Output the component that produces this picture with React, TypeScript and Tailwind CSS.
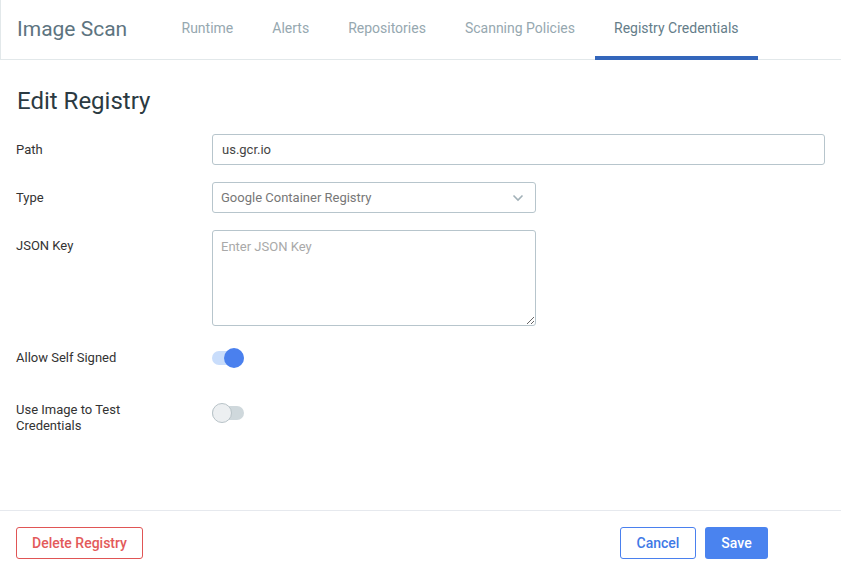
import { useState } from 'react';

const tabs = ['Runtime', 'Alerts', 'Repositories', 'Scanning Policies', 'Registry Credentials'];

function Toggle({ on }: { on: boolean }) {
  return (
    <div className="relative w-[32px] h-[22px] flex items-center">
      <div className={`w-[32px] h-[14px] rounded-full ${on ? 'bg-[#c9ddfb]' : 'bg-[#cfd8dc]'}`} />
      <div
        className={`absolute top-[1px] w-[20px] h-[20px] rounded-full ${
          on ? 'right-0 bg-[#4a80ee]' : 'left-0 bg-[#eceff1] border border-[#b8c3c8]'
        }`}
      />
    </div>
  );
}

export default function App() {
  const [path, setPath] = useState('us.gcr.io');
  const active = 'Registry Credentials';

  return (
    <div className="h-[575px] w-[841px] bg-white flex flex-col font-['Roboto',sans-serif] overflow-hidden">
      {/* Header */}
      <div className="h-[60px] flex items-stretch border-b border-[#e2e8ea] border-l border-l-[#e2e8ea]">
        <div className="w-[161px] pl-[16px] flex items-center pt-[1px] text-[21px] text-[#5d7480]">Image Scan</div>
        <div className="flex items-stretch">
          {tabs.map((t) => (
            <div
              key={t}
              className={`relative px-[19.5px] flex items-center pb-[3px] text-[14px] ${
                t === active ? 'text-[#647d89]' : 'text-[#96a8b0]'
              }`}
            >
              {t}
              {t === active && <div className="absolute left-0 right-0 bottom-[-1px] h-[4px] bg-[#3366bb]" />}
            </div>
          ))}
        </div>
      </div>

      {/* Form */}
      <div className="flex-1 px-[16px] pt-[25px]">
        <h1 className="text-[24px] leading-[32px] text-[#2b3a42] pl-[1px]">Edit Registry</h1>

        <div className="mt-[17px] flex flex-col gap-[17px] text-[13px] text-[#333]">
          <div className="grid grid-cols-[196px_1fr] items-center">
            <label>Path</label>
            <input
              value={path}
              onChange={(e) => setPath(e.target.value)}
              className="h-[31px] w-[613px] border border-[#b7c5cc] rounded-[3px] px-[9px] text-[13px] text-[#444] outline-none"
            />
          </div>

          <div className="grid grid-cols-[196px_1fr] items-center">
            <label>Type</label>
            <div className="h-[31px] w-[324px] border border-[#b7c5cc] rounded-[3px] pl-[8px] pr-[11px] flex items-center justify-between text-[#777]">
              <span>Google Container Registry</span>
              <svg width="12" height="8" viewBox="0 0 12 8" fill="none">
                <path d="M1.5 1.5 6 6l4.5-4.5" stroke="#a2b1b8" strokeWidth="1.6" />
              </svg>
            </div>
          </div>

          <div className="grid grid-cols-[196px_1fr] items-start">
            <label className="pt-[6px]">JSON Key</label>
            <textarea
              placeholder="Enter JSON Key"
              className="h-[96px] w-[324px] border border-[#b7c5cc] rounded-[3px] px-[8px] py-[6px] text-[13px] placeholder:text-[#a9a9a9] outline-none"
            />
          </div>

          <div className="grid grid-cols-[196px_1fr] items-center mt-[4px]">
            <label>Allow Self Signed</label>
            <Toggle on />
          </div>

          <div className="grid grid-cols-[196px_1fr] items-start mt-[16px]">
            <label className="w-[130px] leading-[16px]">Use Image to Test Credentials</label>
            <Toggle on={false} />
          </div>
        </div>
      </div>

      {/* Footer */}
      <div className="h-[65px] border-t border-[#e6e9ee] flex items-start justify-between pt-[16px] pl-[16px] pr-[73px]">
        <button className="h-[32px] px-[15px] border border-[#e05555] rounded-[3px] text-[14px] font-medium text-[#e35a5a]">
          Delete Registry
        </button>
        <div className="flex gap-[9px]">
          <button className="h-[32px] w-[76px] border border-[#4a80ee] rounded-[3px] text-[14px] font-medium text-[#3f79e6]">
            Cancel
          </button>
          <button className="h-[32px] w-[63px] bg-[#4a83ef] rounded-[3px] text-[14px] font-medium text-white">
            Save
          </button>
        </div>
      </div>
    </div>
  );
}
